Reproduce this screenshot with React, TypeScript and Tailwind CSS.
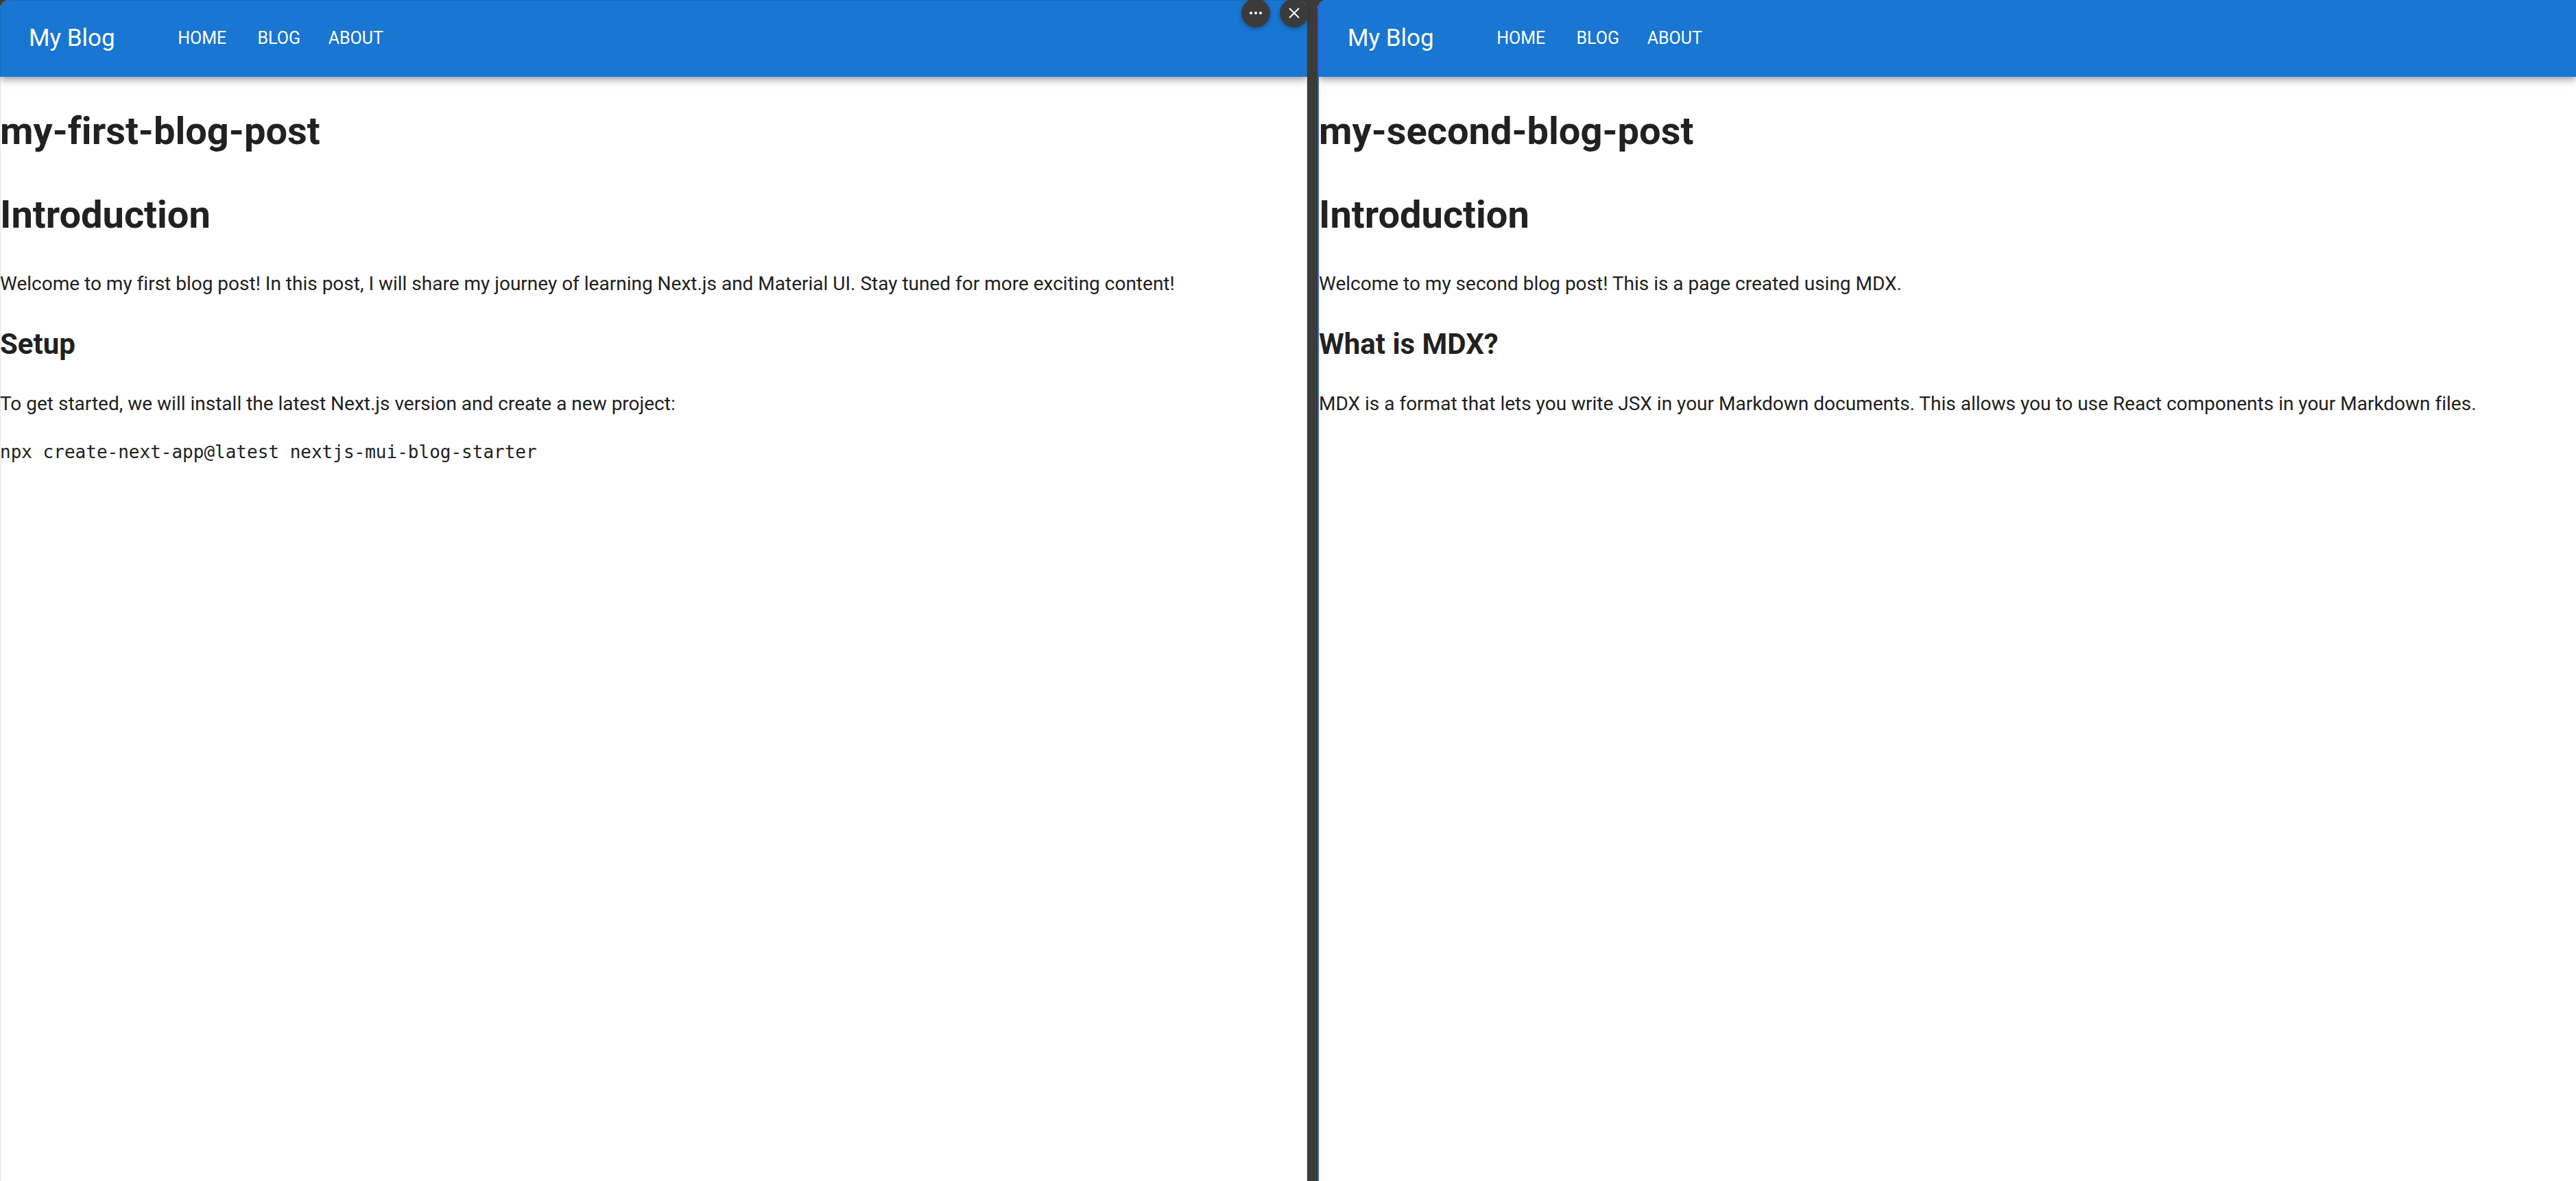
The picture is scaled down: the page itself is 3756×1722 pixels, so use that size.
import type { ReactNode } from "react";

const links = ["Home", "Blog", "About"];

function AppBar() {
  return (
    <header className="relative flex h-28 items-center bg-[#1976d2] px-[42px] text-white shadow-[0_4px_7px_-2px_rgba(0,0,0,0.2),0_7px_9px_0_rgba(0,0,0,0.14),0_2px_18px_0_rgba(0,0,0,0.12)]">
      <a href="#home" className="text-[35px] leading-[56px]">
        My Blog
      </a>
      <nav className="ml-[71px] flex">
        {links.map((link) => (
          <a
            key={link}
            href={"#" + link.toLowerCase()}
            className="min-w-28 px-3.5 text-center text-[25px] leading-[42px] uppercase"
          >
            {link}
          </a>
        ))}
      </nav>
    </header>
  );
}

function H1({ children }: { children: ReactNode }) {
  return <h1 className="mt-[37px] mb-[38px] text-[56px] leading-[84px] font-bold">{children}</h1>;
}

function H2({ children }: { children: ReactNode }) {
  return <h2 className="my-[35px] text-[42px] leading-[63px] font-bold">{children}</h2>;
}

function P({ children }: { children: ReactNode }) {
  return <p className="my-7 leading-[42px]">{children}</p>;
}

function Page({ children }: { children: ReactNode }) {
  return (
    <>
      <AppBar />
      <main className="flow-root">{children}</main>
    </>
  );
}

function WindowControls() {
  const button =
    "flex size-[42px] items-center justify-center rounded-full bg-[#3b3b3b] text-white shadow-[0_2px_6px_rgba(0,0,0,0.3)]";
  return (
    <div className="absolute -top-0.5 -right-0.5 z-10 flex gap-3.5">
      <button type="button" aria-label="More options" className={button}>
        <svg viewBox="0 0 42 42" className="size-full" fill="currentColor">
          <circle cx="14" cy="21" r="2" />
          <circle cx="21" cy="21" r="2" />
          <circle cx="28" cy="21" r="2" />
        </svg>
      </button>
      <button type="button" aria-label="Close" className={button}>
        <svg viewBox="0 0 42 42" className="size-full" fill="none" stroke="currentColor" strokeWidth="1.8">
          <path d="M14 14 28 28M28 14 14 28" />
        </svg>
      </button>
    </div>
  );
}

export default function App() {
  return (
    <div className="flex min-h-screen overflow-hidden bg-[#3b3b3b] font-['Roboto',sans-serif] text-[28px] text-[#212121] [font-variant-ligatures:none]">
      <section className="relative w-[1906px] max-w-[51%] shrink-0">
        <div className="min-h-screen overflow-hidden rounded-t-[14px] bg-white">
          <Page>
            <H1>my-first-blog-post</H1>
            <H1>Introduction</H1>
            <P>
              Welcome to my first blog post! In this post, I will share my journey of learning Next.js and Material UI.
              Stay tuned for more exciting content!
            </P>
            <H2>Setup</H2>
            <P>To get started, we will install the latest Next.js version and create a new project:</P>
            <pre className="my-7 font-['DejaVu_Sans_Mono',monospace] text-[26px] leading-[42px]">
              <code className="font-['DejaVu_Sans_Mono',monospace]">
                npx create-next-app@latest nextjs-mui-blog-starter
              </code>
            </pre>
          </Page>
        </div>
        <div className="pointer-events-none absolute inset-0 rounded-t-[14px] border-x border-t border-black/10" />
        <WindowControls />
      </section>

      <section className="relative ml-[15px] min-w-0 flex-1">
        <div className="min-h-screen overflow-hidden rounded-tl-[14px] bg-white pl-0.5">
          <Page>
            <H1>my-second-blog-post</H1>
            <H1>Introduction</H1>
            <P>Welcome to my second blog post! This is a page created using MDX.</P>
            <H2>What is MDX?</H2>
            <P>
              MDX is a format that lets you write JSX in your Markdown documents. This allows you to use React
              components in your Markdown files.
            </P>
          </Page>
        </div>
        <div className="pointer-events-none absolute inset-0 rounded-tl-[14px] border-l-2 border-[#2b5bd0]" />
      </section>
    </div>
  );
}
